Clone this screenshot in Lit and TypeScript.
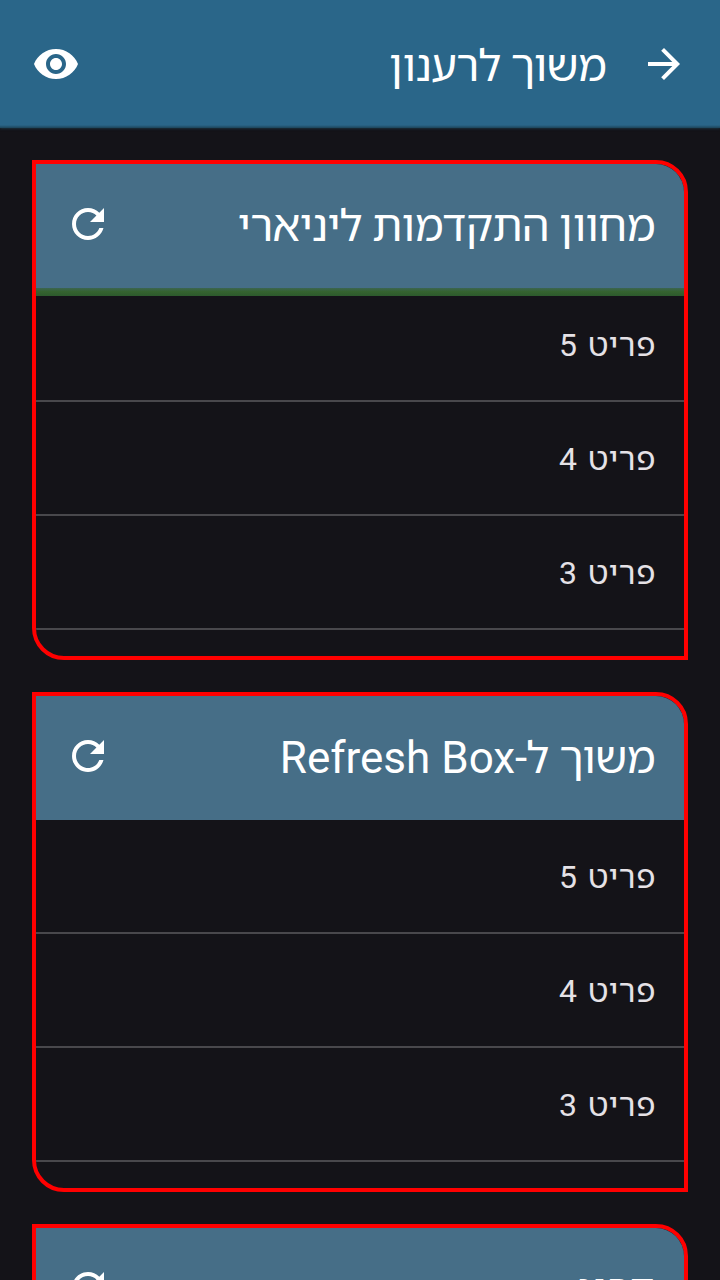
import { LitElement, html, css, svg } from "lit";
import { customElement, property } from "lit/decorators.js";

const refreshPath = svg`<path d="M17.65 6.35C16.2 4.9 14.21 4 12 4c-4.42 0-7.99 3.58-7.99 8s3.57 8 7.99 8c3.73 0 6.84-2.55 7.73-6h-2.08c-.82 2.33-3.04 4-5.65 4-3.31 0-6-2.69-6-6s2.69-6 6-6c1.66 0 3.14.69 4.22 1.78L13 11h7V4l-2.35 2.35z"/>`;

@customElement("refresh-card")
class RefreshCard extends LitElement {
  @property() heading = "";
  @property() latin = "";
  @property({ type: Boolean }) progress = false;

  static styles = css`
    :host { display: block; flex: none; }
    .card {
      box-sizing: border-box; height: 500px; overflow: hidden;
      border: 4px solid #ff0000; border-radius: 0 32px 0 32px;
      background: #141318;
    }
    .header {
      box-sizing: border-box; height: 124px; padding: 0 28px 4px;
      display: flex; align-items: center; justify-content: space-between;
      background: #466e87; color: #fff;
    }
    .title { font-size: 44px; line-height: 56px; font-weight: 400; margin: 0 1px 0 0; padding-top: 3px; white-space: nowrap; letter-spacing: -0.65px; }
    :host([wide]) .title { letter-spacing: 1px; }
    .latin { letter-spacing: 0; }
    .icon { width: 48px; height: 48px; fill: #fff; display: block; }
    .bar { height: 8px; margin-bottom: -8px; background: linear-gradient(#3b6551, #35632f 45%, #2d5a2d); position: relative; }
    .row {
      box-sizing: border-box; height: 114px; padding: 0 28px 2px; border-bottom: 2px solid #49484c;
      display: flex; align-items: center; color: #e5e1e6; font-size: 32px; letter-spacing: 0.6px;
      word-spacing: 2px;
    }
  `;

  render() {
    return html`<section class="card">
      <header class="header">
        <h2 class="title">${this.heading}${this.latin ? html`<span class="latin">${this.latin}</span>` : null}</h2>
        <svg class="icon" viewBox="0 0 24 24">${refreshPath}</svg>
      </header>
      ${this.progress ? html`<div class="bar"></div>` : null}
      ${[5, 4, 3].map((n) => html`<div class="row">פריט ${n}</div>`)}
    </section>`;
  }
}

@customElement("app-root")
class AppRoot extends LitElement {
  static styles = css`
    :host {
      display: flex; flex-direction: column; height: 1280px; overflow: hidden; direction: rtl;
      background: #141318; font-family: Roboto, "Noto Sans Hebrew", "Open Sans", sans-serif;
    }
    .appbar {
      box-sizing: border-box; height: 128px; flex: none; padding: 0 32px;
      display: flex; align-items: center; color: #fff;
      background: linear-gradient(#2a6689 125px, #1d4459 128px);
      box-shadow: 0 1px 2px #1a2f3d;
    }
    .title { flex: 1; margin: 0 34px 0 0; padding-top: 4px; font-size: 44px; line-height: 56px; font-weight: 400; letter-spacing: -0.8px; }
    .icon { width: 48px; height: 48px; fill: #fff; display: block; }
    .list { flex: 1; min-height: 0; display: flex; flex-direction: column; gap: 32px; padding: 32px 32px 0; overflow: hidden; }
  `;

  render() {
    return html`
      <header class="appbar">
        <svg class="icon" viewBox="0 0 24 24"><path d="M12 4l-1.41 1.41L16.17 11H4v2h12.17l-5.58 5.59L12 20l8-8z"/></svg>
        <h1 class="title">משוך לרענון</h1>
        <svg class="icon" viewBox="0 0 24 24"><path d="M12 4.5C7 4.5 2.73 7.61 1 12c1.73 4.39 6 7.5 11 7.5s9.27-3.11 11-7.5c-1.73-4.39-6-7.5-11-7.5zM12 17c-2.76 0-5-2.24-5-5s2.24-5 5-5 5 2.24 5 5-2.24 5-5 5zm0-8c-1.66 0-3 1.34-3 3s1.34 3 3 3 3-1.34 3-3-1.34-3-3-3z"/></svg>
      </header>
      <main class="list">
        <refresh-card heading="מחוון התקדמות ליניארי" progress></refresh-card>
        <refresh-card heading="משוך ל-" latin="Refresh Box"></refresh-card>
        <refresh-card heading="דרוג" wide></refresh-card>
      </main>`;
  }
}
